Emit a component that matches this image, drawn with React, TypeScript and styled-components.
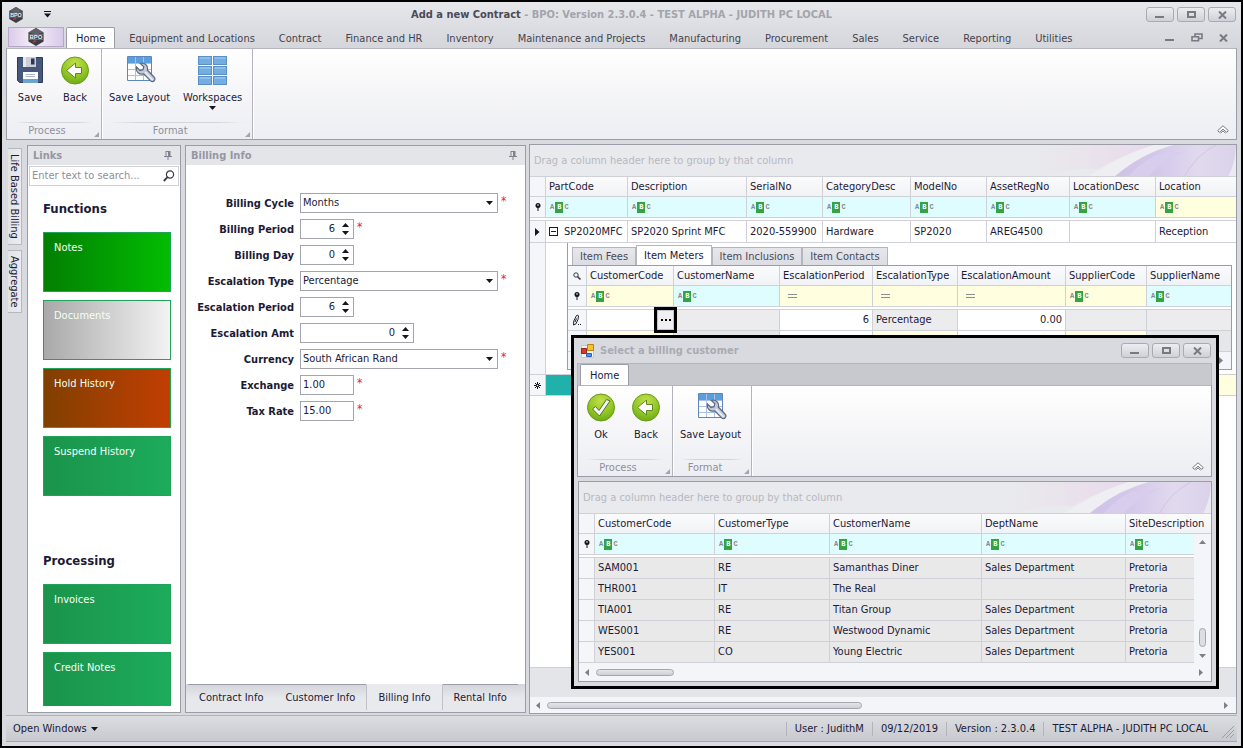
import React from 'react';
import styled, { createGlobalStyle, css } from 'styled-components';

const ink = '#1c1a36';
const muted = '#8d909c';
const line = '#9a9ca6';
const soft = '#cfd0d8';

const Global = createGlobalStyle`
  *, *::before, *::after { box-sizing: border-box; }
  body { margin: 0; }
  body, button, input, select, table {
    font-family: 'DejaVu Sans Condensed', 'DejaVu Sans', sans-serif;
    font-size: 11px;
    line-height: 14px;
    color: ${ink};
  }
  button { border: 0; padding: 0; background: none; }
  svg { display: block; flex: none; }
`;

/* ---------- window shell ---------- */

const Shell = styled.div`
  position: relative;
  display: flex;
  flex-direction: column;
  height: 100vh;
  min-height: 720px;
  overflow: hidden;
  padding: 0 4px 4px;
  border: 2px solid #000;
  background: linear-gradient(#e6e7eb, #d5d6db 46px, #d9dae0 140px);
`;

const TitleBar = styled.header`
  display: flex;
  align-items: center;
  height: 25px;
  padding: 0 1px 0 2px;
  gap: 20px;
`;

const Title = styled.h1`
  flex: 1;
  margin: 0;
  padding-left: 46px;
  font-size: 11px;
  font-weight: 700;
  text-align: center;
  color: #a3a4ac;
  strong { color: #4b4b57; }
`;

const WindowButtons = styled.div`
  display: flex;
  gap: 3px;
`;

const WindowButton = styled.button`
  display: grid;
  place-items: center;
  width: 28px;
  height: 15px;
  border: 1px solid #a9abb3;
  border-radius: 3px;
  background: linear-gradient(#ecedf0, #cfd1d6);
`;

const TabRow = styled.nav`
  display: flex;
  align-items: flex-end;
  height: 21px;
`;

const AppMenu = styled.button`
  display: grid;
  place-items: center;
  width: 56px;
  height: 20px;
  margin: 0 2px 1px 2px;
  border: 1px solid #b3a9c4;
  background: linear-gradient(90deg, #dccbe9, #f3ebf7 40%, #eee6f6 60%, #d8c9ea);
`;

const MenuTab = styled.button<{ $active?: boolean }>`
  height: 21px;
  padding: 2px 12px 0;
  color: #45434f;
  ${p => p.$active && css`
    padding: 2px 9px 0;
    margin-right: 2px;
    border: 1px solid ${line};
    border-bottom: 0;
    border-radius: 2px 2px 0 0;
    background: #fff;
    color: ${ink};
  `}
`;

const ChildButtons = styled.div`
  display: flex;
  align-self: center;
  gap: 16px;
  margin: 0 9px 0 auto;
`;

/* ---------- ribbon ---------- */

const RibbonBar = styled.div`
  display: flex;
  height: 92px;
  border: 1px solid ${line};
  border-top-color: #b4b5bd;
  background: linear-gradient(#fff, #f7f7f9 40%, #edeef3);
`;

const Group = styled.section`
  display: flex;
  flex-direction: column;
  border-right: 1px solid #b3b4bc;
  box-shadow: 1px 0 #fff;
`;

const GroupItems = styled.div`
  display: flex;
  flex: 1;
  gap: 1px;
  padding: 5px 4px 0 1px;
`;

const RibbonButton = styled.button`
  display: flex;
  flex-direction: column;
  align-items: center;
  min-width: 44px;
  padding: 0 6px;
  height: 60px;
  > span { margin: 5px 0 1px; }
`;

const GroupCaption = styled.div`
  position: relative;
  height: 17px;
  padding-right: 14px;
  text-align: center;
  line-height: 17px;
  color: ${muted};
  &::before {
    content: '';
    position: absolute;
    inset: 0 8px auto;
    height: 1px;
    background: linear-gradient(90deg, transparent, #d3d4db 20%, #d3d4db 80%, transparent);
  }
  > svg { position: absolute; right: 2px; bottom: 2px; }
`;

const Collapse = styled.button`
  align-self: flex-end;
  margin: 0 7px 5px auto;
`;

/* ---------- main area ---------- */

const Workspace = styled.main`
  display: flex;
  flex: 1;
  min-height: 0;
  padding: 3px 0 1px;
`;

const SideTabs = styled.div`
  display: flex;
  flex-direction: column;
  gap: 5px;
  width: 21px;
  padding: 5px 5px 0 2px;
`;

const SideTab = styled.button`
  writing-mode: vertical-rl;
  padding: 5px 0;
  border: 1px solid #b6b7bf;
  border-left: 0;
  line-height: 13px;
  background: linear-gradient(90deg, #e2e3e7, #ececf0);
`;

const Panel = styled.section<{ $basis: number }>`
  display: flex;
  flex-direction: column;
  flex: 0 0 ${p => p.$basis}px;
  min-width: 0;
  margin: 2px 0 1px;
  border: 1px solid ${line};
  background: #fff;
  & + & { margin: 2px 3px 1px 4px; }
`;

const PanelHeader = styled.header`
  display: flex;
  align-items: center;
  justify-content: space-between;
  height: 19px;
  padding: 0 8px 0 5px;
  background: #e4e5e9;
  color: #9597a3;
  h2 { margin: 0; font-size: 11px; line-height: 19px; }
`;

const SearchBox = styled.label`
  display: flex;
  align-items: center;
  height: 20px;
  margin: 1px 1px 0;
  padding: 0 3px 0 2px;
  border: 1px solid ${soft};
  input {
    flex: 1;
    min-width: 0;
    border: 0;
    padding: 0;
    outline: 0;
  }
  input::placeholder { color: ${muted}; opacity: 1; }
`;

const TileList = styled.div`
  flex: 1;
  min-height: 0;
  overflow: hidden;
  margin: 0 9px 6px 15px;
  display: flex;
  flex-direction: column;
  gap: 8px;
  h3 {
    flex: none;
    margin: 14px 0 7px;
    font-size: 13px;
    line-height: 17px;
  }
  h3:not(:first-child) { margin-top: 48px; }
`;

const Tile = styled.button<{ $from: string; $to: string }>`
  flex: none;
  height: 60px;
  padding: 8px 10px;
  border: 1px solid #22a35c;
  background: linear-gradient(90deg, ${p => p.$from}, ${p => p.$to});
  color: #f4fff6;
  text-align: left;
  display: flex;
`;

const Form = styled.form`
  flex: 1;
  padding-top: 25px;
`;

const FieldRow = styled.div`
  display: flex;
  align-items: center;
  height: 26px;
  > label {
    width: 108px;
    margin-right: 6px;
    padding-top: 1px;
    text-align: right;
    font-weight: 700;
  }
`;

const Control = styled.div<{ $w: number }>`
  position: relative;
  display: flex;
  width: ${p => p.$w}px;
  height: 20px;
  border: 1px solid #a3a5ad;
  background: #fff;
  > svg { position: absolute; right: 4px; top: 7px; pointer-events: none; }
  input, select {
    appearance: none;
    flex: 1;
    min-width: 0;
    border: 0;
    outline: 0;
    padding: 0 2px;
    background: transparent;
  }
`;

const NumberInput = styled.input`
  && { padding-right: 7px; text-align: right; }
`;

const Stepper = styled.div`
  display: flex;
  flex-direction: column;
  justify-content: space-between;
  padding: 3px 4px 3px 0;
  button { display: block; }
`;

const Required = styled.span`
  margin: -4px 0 0 3px;
  font-size: 12px;
  color: #ee1c1c;
`;

const BottomTabs = styled.nav`
  display: flex;
  height: 28px;
  padding-left: 2px;
  background: linear-gradient(#d4d5da, #e7e8ec 14px);
`;

const BottomTab = styled.button<{ $active?: boolean }>`
  height: 26px;
  padding: 0 11px;
  border-top: 1px solid ${line};
  ${p => p.$active && css`
    border: 1px solid #c0c1c9;
    border-width: 1px 1px 0;
    border-top-color: #e9eaee;
    background: #e9eaee;
  `}
`;

/* ---------- grids ---------- */

const GridPanel = styled.section`
  display: flex;
  flex-direction: column;
  flex: 1;
  min-width: 0;
  margin-top: 1px;
  border: 1px solid ${line};
  background: #fff;
`;

const GroupPanel = styled.div`
  display: flex;
  justify-content: space-between;
  align-items: center;
  height: 32px;
  padding-left: 4px;
  border-bottom: 1px solid ${soft};
  background: #e9eaed;
  color: #b6b8c2;
  line-height: 32px;
  overflow: hidden;
  white-space: nowrap;
`;

const Grid = styled.table`
  width: 100%;
  table-layout: fixed;
  border-collapse: separate;
  border-spacing: 0;
  th, td {
    padding: 0 3px;
    border: solid ${soft};
    border-width: 0 1px 1px 0;
    text-align: left;
    font-weight: 400;
    white-space: nowrap;
    line-height: 14px;
  }
  th:last-child, td:last-child { border-right: 0; }
`;

const HeadRow = styled.tr`
  height: 20px;
  background: linear-gradient(#fbfbfc, #f1f2f5);
`;

const FilterRow = styled.tr`height: 21px;`;

const SplitRow = styled.tr`
  height: 3px;
  td { line-height: 2px; background: #fff; }
`;

const Row = styled.tr<{ $h: number; $bg?: string }>`
  height: ${p => p.$h}px;
  background: ${p => p.$bg || '#fff'};
`;

const Cell = styled.td<{ $bg?: string; $right?: boolean }>`
  position: relative;
  background: ${p => p.$bg || 'transparent'};
  && { text-align: ${p => (p.$right ? 'right' : 'left')}; }
`;

const Marker = styled.td`
  && { padding: 0; }
  background: #f5f6f9;
  svg { margin: 0 auto; }
`;

const DetailCell = styled.td`
  && { padding: 0 4px 0 21px; vertical-align: top; }
`;

const Detail = styled.div`
  display: flex;
  flex-direction: column;
  height: 127px;
  padding-top: 2px;
  border-left: 1px solid ${line};
  border-bottom: 1px solid ${line};
`;

const DetailTabs = styled.div`
  display: flex;
  align-items: flex-end;
  height: 20px;
  padding-left: 4px;
`;

const DetailTab = styled.button<{ $active?: boolean }>`
  height: ${p => (p.$active ? 20 : 18)}px;
  padding: 0 7px;
  border: 1px solid #b4b5bd;
  border-width: 1px 1px 0 1px;
  background: ${p => (p.$active ? '#fff' : 'linear-gradient(#e6e7ec, #dcdde2)')};
  color: ${p => (p.$active ? ink : '#4a4958')};
`;

const DetailBody = styled.div`
  display: flex;
  flex-direction: column;
  flex: 1;
  border: solid ${line};
  border-width: 1px 1px 0 0;
`;

const ExpandCell = styled.div`
  display: flex;
  align-items: center;
  gap: 6px;
`;

const Expander = styled.button`
  display: grid;
  place-items: center;
  flex: none;
  width: 9px;
  height: 9px;
  border: 1px solid ${ink};
  &::after { content: ''; width: 5px; height: 1px; background: ${ink}; }
`;

const Lookup = styled.button`
  position: absolute;
  right: -4px;
  top: -3px;
  z-index: 1;
  width: 23px;
  height: 26px;
  display: grid;
  place-items: center;
  border: 3px solid #000;
  background: #f0f0f2;
  box-shadow: inset 0 0 0 1px #c3c4cb;
`;

const Abc = styled.span`
  display: inline-flex;
  align-items: center;
  padding-left: 1px;
  font: 700 7px/9px 'Liberation Mono', monospace;
  color: #84868c;
  vertical-align: middle;
  b { margin: 0 1px; padding: 0 2px; line-height: 11px; background: #35a344; color: #fff; }
`;

const Equals = styled.span`
  display: inline-block;
  width: 9px;
  height: 4px;
  margin-left: 5px;
  border: solid #8b8d94;
  border-width: 1px 0;
  vertical-align: middle;
`;

const Fill = styled.div`flex: 1;`;

const GridFooter = styled.div`
  height: 30px;
  border-top: 1px solid ${soft};
  background: #e4e5e9;
`;

const HScroll = styled.div<{ $h: number }>`
  display: flex;
  align-items: center;
  gap: 5px;
  height: ${p => p.$h}px;
  padding: 0 6px 0 5px;
  background: #f4f5f8;
`;

const HTrack = styled.div`
  flex: 1;
`;

const HThumb = styled.div<{ $w: string }>`
  width: ${p => p.$w};
  height: 7px;
  border: 1px solid #a3a5af;
  border-radius: 4px;
  background: linear-gradient(#e4e5e9, #cfd0d7);
`;

const VScroll = styled.div`
  position: absolute;
  right: 0;
  top: 52px;
  bottom: 18px;
  width: 17px;
  display: flex;
  flex-direction: column;
  align-items: center;
  padding: 5px 0 4px;
  background: #f4f5f8;
`;

const VThumb = styled.div`
  width: 7px;
  height: 19px;
  margin: auto 0 5px;
  border: 1px solid #a3a5af;
  border-radius: 4px;
  background: #dddee4;
`;

/* ---------- dialog ---------- */

const Dialog = styled.div`
  position: absolute;
  z-index: 2;
  top: 333px;
  right: 22px;
  width: 648px;
  border: 3px solid #000;
  padding: 0 4px 4px 3px;
  background: #d9dadf;
`;

const DialogTitle = styled.header`
  display: flex;
  align-items: center;
  gap: 5px;
  height: 25px;
  padding: 0 1px 0 4px;
  h2 { flex: 1; margin: 0; padding-top: 1px; font-size: 11px; color: #a9abb4; }
`;

const DialogTabs = styled.nav`
  display: flex;
  align-items: flex-end;
  height: 22px;
  padding-left: 2px;
  border: 1px solid #b4b5bd;
  border-bottom: 0;
  background: #c8c9ce;
`;

const DialogGrid = styled(GridPanel)`
  position: relative;
  margin: 4px 0 0 1px;
`;

/* ---------- status bar ---------- */

const StatusBar = styled.footer`
  display: flex;
  align-items: center;
  height: 27px;
  padding: 1px 3px 0 7px;
  border-top: 1px solid #b2b3bb;
  border-bottom: 1px solid #a4a5ae;
  background: linear-gradient(#dcdde1, #c8c9ce);
  > svg { margin: 6px 0 0 6px; }
`;

const StatusMenu = styled.button`
  display: flex;
  align-items: center;
  gap: 4px;
  margin-right: auto;
`;

const StatusItem = styled.span`
  padding: 0 8px;
  border-left: 1px solid #b2b3bb;
`;

/* ---------- icons ---------- */

const Hex = ({ size }: { size: number }) => (
  <svg width={size} height={size} viewBox="0 0 18 18">
    <path d="M9 0l7.600 4.400v9L9 18l-7.600-4.600v-9z" fill="#3c3d42" />
    <path d="M9 0l7.600 4.400L9 6.500 1.400 4.400z" fill="#606168" />
    <path d="M1.400 6.500h15.200M1.400 11.500h15.200" stroke="#8f9097" strokeWidth=".6" />
    <text x="9" y="11" textAnchor="middle" fontFamily="Liberation Sans, sans-serif" fontWeight="700" fontSize="6" fill="#f0f0f2">BPO</text>
    <path d="M6 14.500l2-2 1 1.500" fill="none" stroke="#c8323c" strokeWidth="1.300" />
  </svg>
);

const Caret = ({ up }: { up?: boolean }) => (
  <svg width="7" height="4" viewBox="0 0 7 4"><path d={up ? 'M0 4h7L3.500 0z' : 'M0 0h7L3.500 4z'} fill="#16151f" /></svg>
);

const QuickAccess = () => (
  <svg width="7" height="7" viewBox="0 0 7 7"><path d="M0 0h7v1H0zM0 2.500h7L3.500 6.500z" fill="#16151f" /></svg>
);

const Arrow = ({ dir }: { dir: 'left' | 'right' | 'up' | 'down' }) => {
  const d = { left: 'M5 0v7L1 3.500z', right: 'M1 0v7l4-3.500z', up: 'M0 5h7L3.500 1z', down: 'M0 2h7L3.500 6z' }[dir];
  return <svg width="7" height="7" viewBox="0 0 7 7"><path d={d} fill="#7d808b" /></svg>;
};

const Minimize = () => <svg width="10" height="8" viewBox="0 0 10 8"><path d="M0 5h9v2H0z" fill="#777983" /></svg>;
const Maximize = () => <svg width="9" height="7" viewBox="0 0 9 7"><path d="M1 1h7v5H1z" fill="none" stroke="#777983" strokeWidth="2" /></svg>;
const Restore = () => (
  <svg width="12" height="9" viewBox="0 0 12 9" fill="none" stroke="#777983" strokeWidth="1.600">
    <path d="M4 3.500V1h7v4.500H8M1 3.800h6.500v4H1z" />
  </svg>
);
const Close = () => <svg width="9" height="8" viewBox="0 0 9 8"><path d="M1 .5l7 7M8 .5l-7 7" stroke="#777983" strokeWidth="2" /></svg>;

const Pin = () => (
  <svg width="8" height="9" viewBox="0 0 8 9"><path d="M1.500 0h5v5H8v1H4.500v3h-1V6H0V5h1.500z" fill="#80838f" /><path d="M2.500 1h1.500v4H2.500z" fill="#e4e5e9" /></svg>
);

const Magnifier = () => (
  <svg width="12" height="12" viewBox="0 0 12 12" fill="none" stroke="#3a3947">
    <circle cx="7" cy="4.500" r="3.600" strokeWidth="1.200" /><path d="M4.500 7.200L.8 11" strokeWidth="1.800" />
  </svg>
);
const MagnifierLeft = () => (
  <svg width="8" height="8" viewBox="0 0 8 8" fill="none" stroke="#3a3947"><circle cx="3" cy="3" r="2.200" /><path d="M4.600 4.600L7.500 7.500" strokeWidth="1.500" /></svg>
);

const FilterPin = () => (
  <svg width="6" height="8" viewBox="0 0 6 8"><circle cx="3" cy="2.500" r="2.500" fill="#16151f" /><path d="M2.500 4h1v4h-1z" fill="#16151f" /><circle cx="3" cy="2" r=".8" fill="#fff" /></svg>
);
const Current = () => <svg width="5" height="8" viewBox="0 0 5 8"><path d="M0 0l4.500 4L0 8z" fill="#16151f" /></svg>;
const NewMark = () => (
  <svg width="7" height="7" viewBox="0 0 7 7" stroke="#16151f"><path d="M3.500 0v7M0 3.500h7M1 1l5 5M6 1L1 6" /><circle cx="3.500" cy="3.500" r=".8" fill="#fff" stroke="none" /></svg>
);
const Pencil = () => (
  <svg width="10" height="12" viewBox="0 0 10 12" fill="none" stroke="#22212e"><path d="M1.500 11l.3-4L4.500 1.500Q6 .5 6.500 2L6 5.500 3.800 10zM4.500 4.500L3 8" /><path d="M6 10.500h1M8 10.500h1" /></svg>
);
const ChevronUp = () => (
  <svg width="12" height="9" viewBox="0 0 12 9" fill="#fff" stroke="#777983"><path d="M6 .8l5.300 4.800-1.500 1.800L6 4.200 2.200 7.400.7 5.600z" /><path d="M3.500 8.200L6 6l2.500 2.200" /></svg>
);
const Launcher = () => <svg width="5" height="5" viewBox="0 0 5 5"><path d="M5 0v5H0z" fill="#a3a5ae" /></svg>;
const Grip = () => <svg width="12" height="12" viewBox="0 0 12 12"><path d="M0 12L12 0M4 12l8-8M8 12l4-4" stroke="#9a9ca6" /></svg>;

const SaveIcon = () => (
  <svg width="32" height="32" viewBox="0 0 32 32">
    <path d="M3.500 3.500h25v25H5.500l-2-2z" fill="#46587c" stroke="#2f3c59" />
    <path d="M9 3h13v10H9z" fill="#c9ced9" /><path d="M17 4.500h3.500v6H17z" fill="#2c3750" /><path d="M9 3h3v10H9z" fill="#e6e9ef" />
    <path d="M9 18h15v10.500H9z" fill="#fff" /><path d="M9 25h15v3.500H9z" fill="#5fa6dd" />
    <path d="M11.500 20.500h9.500M11.500 22.500h9.500" stroke="#a7b7cf" />
  </svg>
);
const Ball = ({ children }: { children: React.ReactNode }) => (
  <svg width="32" height="32" viewBox="0 0 32 32">
    <defs><radialGradient id="ball" cx=".5" cy=".25" r=".8"><stop offset="0" stopColor="#c3e04a" /><stop offset=".6" stopColor="#8fc524" /><stop offset="1" stopColor="#69a514" /></radialGradient></defs>
    <circle cx="16" cy="16.500" r="13.500" fill="url(#ball)" stroke="#6a9a1c" />
    {children}
  </svg>
);
const BackIcon = () => <Ball><path d="M7.500 16.500l9-7.500v4.500h6v6h-6V24z" fill="#fff" stroke="#5d8a20" strokeWidth="1" /></Ball>;
const OkIcon = () => <Ball><path d="M7.500 18l3-2.500 3.500 4 7.500-11 3.500 1.500L14.500 25z" fill="#f4f5fa" stroke="#55702a" strokeWidth="1" /></Ball>;
const LayoutIcon = () => (
  <svg width="32" height="32" viewBox="0 0 32 32">
    <path d="M3.500 2.500h24v24h-24z" fill="#fff" stroke="#5b87bd" />
    <path d="M4 3h23v6H4z" fill="#5a9fdc" /><path d="M4 9.500h23M4 15.500h23M4 21.500h23M11.500 3v23M19.500 3v23" stroke="#a9c0e4" />
    <path d="M12.500 13l3.500 3.500 3-.8.8-3-3.500-3.200c4-1.500 8.200 2 7 6.500l6.700 7c2.400 2.700-.8 6.200-3.600 3.600l-6.700-6.700c-4 1.200-8.500-2-7.200-6.900z" fill="#c3cbd9" stroke="#5d6880" strokeWidth="1.200" />
    <path d="M21 18l7.500 8" stroke="#eef1f6" strokeWidth="1.500" />
  </svg>
);
const WorkspaceIcon = () => (
  <svg width="32" height="32" viewBox="0 0 32 32">
    {[2, 12, 22].map(y => [2, 17].map(x => (
      <g key={`${x}-${y}`}><rect x={x - 0.5} y={y + 0.5} width="13" height="8" fill="#74aee0" stroke="#5a8fc6" /><path d={`M${x + 0.5} ${y + 2}h11`} stroke="#a9d0f0" /></g>
    )))}
  </svg>
);
const FormIcon = () => (
  <svg width="14" height="14" viewBox="0 0 14 14">
    <path d="M.5 1.500h12v12H.5z" fill="#f4f4f6" stroke="#c4c6cc" />
    <path d="M.5 4.500h5v5h-5z" fill="#d23a2a" stroke="#922" /><path d="M6.500.5h6v6h-6z" fill="#f7c22e" stroke="#b98410" /><path d="M5.500 9.500h5v3h-5z" fill="#4f8eea" stroke="#2c60b8" />
  </svg>
);
const Swirl = () => (
  <svg width="200" height="32" viewBox="0 0 200 32">
    <defs>
      <linearGradient id="pink"><stop offset="0" stopColor="#e9eaed" /><stop offset=".7" stopColor="#e9dfec" /><stop offset="1" stopColor="#e6d9ec" /></linearGradient>
      <linearGradient id="violet"><stop offset="0" stopColor="#cfc2e8" /><stop offset=".35" stopColor="#d3c8ea" /><stop offset=".7" stopColor="#e1daee" /><stop offset="1" stopColor="#dbd2ea" /></linearGradient>
    </defs>
    <path d="M0 0h118Q90 8 62 24 36 22 0 32z" fill="url(#pink)" />
    <path d="M118 0Q90 8 52 32H78Q106 8 138 0z" fill="#efeff3" />
    <path d="M138 0Q106 8 78 32h114q8-16 8-32z" fill="url(#violet)" />
    <path d="M180 0Q160 10 148 32" fill="none" stroke="#d9c2e4" />
    <path d="M120 10Q104 18 92 32h20Q126 16 150 6z" fill="#d8cdec" />
    <path d="M200 2Q200 20 192 32h8z" fill="#eceaf1" />
  </svg>
);

/* ---------- pieces ---------- */

const GroupBox = ({ caption, children }: { caption: string; children: React.ReactNode }) => (
  <Group>
    <GroupItems>{children}</GroupItems>
    <GroupCaption>{caption}<Launcher /></GroupCaption>
  </Group>
);

const Action = ({ icon, label, menu }: { icon: React.ReactNode; label: string; menu?: boolean }) => (
  <RibbonButton type="button">{icon}<span>{label}</span>{menu && <Caret />}</RibbonButton>
);

const Controls = () => (
  <WindowButtons>
    <WindowButton aria-label="Minimize"><Minimize /></WindowButton>
    <WindowButton aria-label="Maximize"><Maximize /></WindowButton>
    <WindowButton aria-label="Close"><Close /></WindowButton>
  </WindowButtons>
);

const AbcMark = () => <Abc>A<b>B</b>C</Abc>;

type Column = { name: string; width?: number; tint?: string; numeric?: boolean };
const aqua = '#dffdff';
const cream = '#ffffdf';

const Cols = ({ marker, columns }: { marker: number; columns: Column[] }) => (
  <colgroup><col width={marker} />{columns.map(c => <col key={c.name} width={c.width} />)}</colgroup>
);

const GridTop = ({ columns, corner }: { columns: Column[]; corner?: React.ReactNode }) => (
  <thead>
    <HeadRow><Marker>{corner}</Marker>{columns.map(c => <th key={c.name} scope="col">{c.name}</th>)}</HeadRow>
    <FilterRow>
      <Marker><FilterPin /></Marker>
      {columns.map(c => <Cell key={c.name} $bg={c.tint || aqua}>{c.numeric ? <Equals /> : <AbcMark />}</Cell>)}
    </FilterRow>
    <SplitRow><td colSpan={columns.length + 1} /></SplitRow>
  </thead>
);

const Scroller = ({ height, thumb }: { height: number; thumb?: string }) => (
  <HScroll $h={height}><Arrow dir="left" /><HTrack>{thumb && <HThumb $w={thumb} />}</HTrack><Arrow dir="right" /></HScroll>
);

const partColumns: Column[] = [
  { name: 'PartCode', width: 82 }, { name: 'Description', width: 119 }, { name: 'SerialNo', width: 76 },
  { name: 'CategoryDesc', width: 88 }, { name: 'ModelNo', width: 76 }, { name: 'AssetRegNo', width: 83 },
  { name: 'LocationDesc', width: 86 }, { name: 'Location', tint: cream },
];
const meterColumns: Column[] = [
  { name: 'CustomerCode', width: 87, tint: cream }, { name: 'CustomerName', width: 106 },
  { name: 'EscalationPeriod', width: 93, tint: cream, numeric: true }, { name: 'EscalationType', width: 85, tint: cream, numeric: true },
  { name: 'EscalationAmount', width: 108, tint: cream, numeric: true }, { name: 'SupplierCode', width: 81, tint: cream },
  { name: 'SupplierName' },
];
const customerColumns: Column[] = [
  { name: 'CustomerCode', width: 120 }, { name: 'CustomerType', width: 115 }, { name: 'CustomerName', width: 152 },
  { name: 'DeptName', width: 144 }, { name: 'SiteDescription' },
];
const customers = [
  ['SAM001', 'RE', 'Samanthas Diner', 'Sales Department', 'Pretoria'],
  ['THR001', 'IT', 'The Real', '', 'Pretoria'],
  ['TIA001', 'RE', 'Titan Group', 'Sales Department', 'Pretoria'],
  ['WES001', 'RE', 'Westwood Dynamic', 'Sales Department', 'Pretoria'],
  ['YES001', 'CO', 'Young Electric', 'Sales Department', 'Pretoria'],
];
const menus = ['Equipment and Locations', 'Contract', 'Finance and HR', 'Inventory', 'Maintenance and Projects',
  'Manufacturing', 'Procurement', 'Sales', 'Service', 'Reporting', 'Utilities'];

type Field = { label: string; value: string; kind: 'select' | 'number' | 'text'; width: number; required?: boolean };
const fields: Field[] = [
  { label: 'Billing Cycle', value: 'Months', kind: 'select', width: 198, required: true },
  { label: 'Billing Period', value: '6', kind: 'number', width: 54, required: true },
  { label: 'Billing Day', value: '0', kind: 'number', width: 54 },
  { label: 'Escalation Type', value: 'Percentage', kind: 'select', width: 198, required: true },
  { label: 'Escalation Period', value: '6', kind: 'number', width: 54 },
  { label: 'Escalation Amt', value: '0', kind: 'number', width: 114 },
  { label: 'Currency', value: 'South African Rand', kind: 'select', width: 198, required: true },
  { label: 'Exchange', value: '1.00', kind: 'text', width: 54, required: true },
  { label: 'Tax Rate', value: '15.00', kind: 'text', width: 54, required: true },
];

const FormField = ({ label, value, kind, width, required }: Field) => {
  const id = label.toLowerCase().replace(/ /g, '-');
  return (
    <FieldRow>
      <label htmlFor={id}>{label}</label>
      <Control $w={width}>
        {kind === 'select' && <><select id={id} defaultValue={value}><option>{value}</option></select><Caret /></>}
        {kind === 'text' && <input id={id} defaultValue={value} />}
        {kind === 'number' && (
          <>
            <NumberInput id={id} inputMode="numeric" defaultValue={value} />
            <Stepper>
              <button type="button" aria-label={`Increase ${label}`}><Caret up /></button>
              <button type="button" aria-label={`Decrease ${label}`}><Caret /></button>
            </Stepper>
          </>
        )}
      </Control>
      {required && <Required>*</Required>}
    </FieldRow>
  );
};

const LinksPanel = () => (
  <Panel $basis={154}>
    <PanelHeader><h2>Links</h2><Pin /></PanelHeader>
    <SearchBox><input aria-label="Search links" placeholder="Enter text to search..." /><Magnifier /></SearchBox>
    <TileList>
      <h3>Functions</h3>
      <Tile $from="#027f02" $to="#02bd02">Notes</Tile>
      <Tile $from="#a9a9a9" $to="#f3f3f3">Documents</Tile>
      <Tile $from="#804000" $to="#c23e02">Hold History</Tile>
      <Tile $from="#1a944a" $to="#1dac5c">Suspend History</Tile>
      <h3>Processing</h3>
      <Tile $from="#1a944a" $to="#1dac5c">Invoices</Tile>
      <Tile $from="#1a944a" $to="#1dac5c">Credit Notes</Tile>
    </TileList>
  </Panel>
);

const BillingPanel = () => (
  <Panel $basis={341}>
    <PanelHeader><h2>Billing Info</h2><Pin /></PanelHeader>
    <Form>{fields.map(f => <FormField key={f.label} {...f} />)}</Form>
    <BottomTabs>
      <BottomTab>Contract Info</BottomTab>
      <BottomTab>Customer Info</BottomTab>
      <BottomTab $active>Billing Info</BottomTab>
      <BottomTab>Rental Info</BottomTab>
    </BottomTabs>
  </Panel>
);

const MetersDetail = () => (
  <Detail>
    <DetailTabs>
      <DetailTab>Item Fees</DetailTab>
      <DetailTab $active>Item Meters</DetailTab>
      <DetailTab>Item Inclusions</DetailTab>
      <DetailTab>Item Contacts</DetailTab>
    </DetailTabs>
    <DetailBody>
      <Grid>
        <Cols marker={19} columns={meterColumns} />
        <GridTop columns={meterColumns} corner={<MagnifierLeft />} />
        <tbody>
          <Row $h={21} $bg="#ececef">
            <Marker><Pencil /></Marker>
            <Cell $bg="#fff">
              <Lookup aria-label="Choose customer"><svg width="10" height="2" viewBox="0 0 10 2"><path d="M0 0h2v2H0zM4 0h2v2H4zM8 0h2v2H8z" fill="#000" /></svg></Lookup>
            </Cell>
            <Cell /><Cell $bg="#fff" $right>6</Cell><Cell>Percentage</Cell><Cell $bg="#fff" $right>0.00</Cell><Cell /><Cell />
          </Row>
          <Row $h={21}>
            <Marker />
            <Cell $bg={cream} /><Cell $bg="#e6e7e9" /><Cell /><Cell $bg={cream} /><Cell /><Cell $bg={cream} /><Cell $bg="#e6e7e9" />
          </Row>
        </tbody>
      </Grid>
      <Scroller height={17} />
    </DetailBody>
  </Detail>
);

const PartsGrid = () => (
  <GridPanel>
    <GroupPanel>Drag a column header here to group by that column<Swirl /></GroupPanel>
    <Grid>
      <Cols marker={16} columns={partColumns} />
      <GridTop columns={partColumns} />
      <tbody>
        <Row $h={22}>
          <Marker><Current /></Marker>
          <td><ExpandCell><Expander aria-label="Collapse row" />SP2020MFC</ExpandCell></td>
          <td>SP2020 Sprint MFC</td><td>2020-559900</td><td>Hardware</td><td>SP2020</td><td>AREG4500</td><td /><td>Reception</td>
        </Row>
        <Row $h={132}><Marker /><DetailCell colSpan={8}><MetersDetail /></DetailCell></Row>
        <Row $h={21} $bg="#20b2aa">
          <Marker><NewMark /></Marker><td colSpan={7} /><Cell $bg={cream} />
        </Row>
      </tbody>
    </Grid>
    <Fill />
    <GridFooter />
    <Scroller height={16} thumb="47%" />
  </GridPanel>
);

const CustomerDialog = () => (
  <Dialog role="dialog" aria-label="Select a billing customer">
    <DialogTitle><FormIcon /><h2>Select a billing customer</h2><Controls /></DialogTitle>
    <DialogTabs><MenuTab $active>Home</MenuTab></DialogTabs>
    <RibbonBar>
      <GroupBox caption="Process"><Action icon={<OkIcon />} label="Ok" /><Action icon={<BackIcon />} label="Back" /></GroupBox>
      <GroupBox caption="Format"><Action icon={<LayoutIcon />} label="Save Layout" /></GroupBox>
      <Collapse aria-label="Collapse ribbon"><ChevronUp /></Collapse>
    </RibbonBar>
    <DialogGrid>
      <GroupPanel>Drag a column header here to group by that column<Swirl /></GroupPanel>
      <Grid>
        <Cols marker={16} columns={customerColumns} />
        <GridTop columns={customerColumns} />
        <tbody>
          {customers.map(row => (
            <Row key={row[0]} $h={21} $bg="#e9e9ea"><Marker />{row.map((text, i) => <td key={i}>{text}</td>)}</Row>
          ))}
        </tbody>
      </Grid>
      <Scroller height={18} thumb="78px" />
      <VScroll><Arrow dir="up" /><VThumb /><Arrow dir="down" /></VScroll>
    </DialogGrid>
  </Dialog>
);

export default function App() {
  return (
    <>
      <Global />
      <Shell>
        <TitleBar>
          <Hex size={16} /><QuickAccess />
          <Title><strong>Add a new Contract</strong> - BPO: Version 2.3.0.4 - TEST ALPHA - JUDITH PC LOCAL</Title>
          <Controls />
        </TitleBar>
        <TabRow>
          <AppMenu aria-label="Application menu"><Hex size={18} /></AppMenu>
          <MenuTab $active>Home</MenuTab>
          {menus.map(m => <MenuTab key={m}>{m}</MenuTab>)}
          <ChildButtons>
            <button aria-label="Minimize document"><Minimize /></button>
            <button aria-label="Restore document"><Restore /></button>
            <button aria-label="Close document"><Close /></button>
          </ChildButtons>
        </TabRow>
        <RibbonBar>
          <GroupBox caption="Process"><Action icon={<SaveIcon />} label="Save" /><Action icon={<BackIcon />} label="Back" /></GroupBox>
          <GroupBox caption="Format"><Action icon={<LayoutIcon />} label="Save Layout" /><Action icon={<WorkspaceIcon />} label="Workspaces" menu /></GroupBox>
          <Collapse aria-label="Collapse ribbon"><ChevronUp /></Collapse>
        </RibbonBar>
        <Workspace>
          <SideTabs><SideTab>Life Based Billing</SideTab><SideTab>Aggregate</SideTab></SideTabs>
          <LinksPanel />
          <BillingPanel />
          <PartsGrid />
        </Workspace>
        <StatusBar>
          <StatusMenu>Open Windows <Caret /></StatusMenu>
          <StatusItem>User : JudithM</StatusItem>
          <StatusItem>09/12/2019</StatusItem>
          <StatusItem>Version : 2.3.0.4</StatusItem>
          <StatusItem>TEST ALPHA - JUDITH PC LOCAL</StatusItem>
          <Grip />
        </StatusBar>
        <CustomerDialog />
      </Shell>
    </>
  );
}
